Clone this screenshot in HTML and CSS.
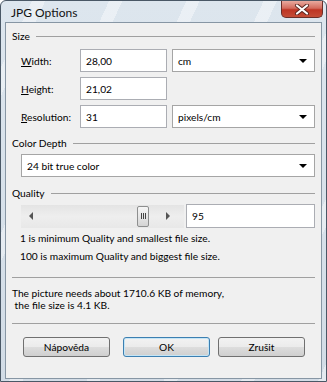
FILE: index.html
```html
<!DOCTYPE html>
<html lang="cs">

<head>
    <meta charset="UTF-8">
    <title>JPG Options</title>
    <link rel="stylesheet" href="styles.css">
</head>

<body>
    <div class="window">
        <div class="titlebar">
            <span class="title">JPG Options</span>
            <div class="close">
                <svg width="16" height="11" viewBox="0 0 16 11">
                    <path d="M3 1.5 L13 9.5 M13 1.5 L3 9.5" stroke="#5a2620" stroke-width="4" stroke-linecap="round" fill="none"/>
                    <path d="M3 1.5 L13 9.5 M13 1.5 L3 9.5" stroke="#fff" stroke-width="2.2" stroke-linecap="round" fill="none"/>
                </svg>
            </div>
        </div>
        <div class="client">
            <div class="group size-group">Size</div>
            <div class="row">
                <label><u>W</u>idth:</label>
                <div class="field">28,00</div>
                <div class="combo">cm<span class="arrow"></span></div>
            </div>
            <div class="row">
                <label><u>H</u>eight:</label>
                <div class="field">21,02</div>
            </div>
            <div class="row">
                <label><u>R</u>esolution:</label>
                <div class="field">31</div>
                <div class="combo">pixels/cm<span class="arrow"></span></div>
            </div>

            <div class="group">Color Depth</div>
            <div class="combo wide">24 bit true color<span class="arrow"></span></div>

            <div class="group quality-group">Quality</div>
            <div class="quality-row">
                <div class="scroll">
                    <span class="tri left"></span>
                    <div class="track">
                        <div class="thumb"><i></i><i></i><i></i></div>
                    </div>
                    <span class="tri right"></span>
                </div>
                <div class="field value">95</div>
            </div>
            <p class="note">1 is minimum Quality and smallest file size.</p>
            <p class="note">100 is maximum Quality and biggest file size.</p>

            <hr>
            <p class="memory">The picture needs about 1710.6 KB of memory,<br>&nbsp;the file size is 4.1 KB.</p>
            <hr>

            <div class="buttons">
                <button class="btn">Nápověda</button>
                <button class="btn default">OK</button>
                <button class="btn">Zrušit</button>
            </div>
        </div>
    </div>
</body>

</html>
```

FILE: styles.css
```css
body {
    margin: 0;
    font-family: 'Lato', 'Noto Sans', sans-serif;
    font-size: 10.2px;
    color: #000;
}

.window {
    width: 327px;
    height: 382px;
    box-sizing: border-box;
    display: flex;
    flex-direction: column;
    padding: 0 4px 2px 4px;
    border: 1px solid #4a5866;
    border-radius: 6px 6px 0 0;
    background:
        repeating-linear-gradient(115deg, rgba(255, 255, 255, 0) 0 28px, rgba(255, 255, 255, 0.4) 28px 40px, rgba(255, 255, 255, 0) 40px 70px),
        linear-gradient(#dde6ee, #d2dce6);
}

.titlebar {
    height: 21px;
    display: flex;
    align-items: flex-start;
}

.title {
    font-size: 12px;
    padding: 4px 0 0 6px;
    color: #111;
}

.close {
    margin-left: auto;
    margin-right: -1px;
    width: 42px;
    height: 17px;
    box-sizing: border-box;
    border: 1px solid #6b2e28;
    border-top: none;
    border-radius: 0 0 5px 5px;
    background: linear-gradient(#e9aa9f, #d36b5d 45%, #be3524 55%, #c44d37);
    display: flex;
    align-items: center;
    justify-content: center;
}

.client {
    flex: 1;
    background-color: #f0f0f0;
    border: 1px solid #8796a4;
    padding: 0 6px;
}

.group {
    display: flex;
    align-items: center;
    height: 14px;
    margin-top: 8px;
    margin-bottom: 4px;
}

.group::after {
    content: "";
    flex: 1;
    height: 1px;
    background-color: #a0a0a0;
    margin-left: 6px;
    margin-top: 1px;
}

.size-group {
    margin-top: 6px;
    margin-bottom: 6px;
}

.quality-group {
    margin-top: 9px;
}

.row {
    display: flex;
    align-items: center;
    height: 23px;
    margin-bottom: 5px;
    padding-left: 9px;
}

label {
    width: 59px;
}

.field,
.combo {
    height: 23px;
    box-sizing: border-box;
    background-color: #fff;
    border: 1px solid #abadb3;
    display: flex;
    align-items: center;
    padding-left: 5px;
}

.field {
    width: 87px;
}

.combo {
    width: 143px;
    margin-left: 5px;
    border-color: #a5a5a5;
}

.combo.wide {
    width: 294px;
    margin-left: 9px;
}

.arrow {
    margin-left: auto;
    margin-right: 7px;
    border-left: 4px solid transparent;
    border-right: 4px solid transparent;
    border-top: 4px solid #000;
}

.quality-row {
    display: flex;
    align-items: center;
    margin-top: 4px;
    padding-left: 9px;
}

.scroll {
    width: 163px;
    height: 23px;
    display: flex;
    align-items: center;
    background: linear-gradient(#e4e4e4, #eeeeee 50%, #e8e8e8);
}

.tri {
    width: 0;
    height: 0;
    border-top: 4px solid transparent;
    border-bottom: 4px solid transparent;
}

.tri.left {
    border-right: 4px solid #555;
    margin: 0 0 0 8px;
}

.tri.right {
    border-left: 4px solid #555;
    margin: 0 14px 0 0;
}

.track {
    flex: 1;
    display: flex;
    justify-content: flex-end;
    padding-right: 17px;
}

.thumb {
    width: 12px;
    height: 21px;
    box-sizing: border-box;
    border: 1px solid #8e8f8f;
    border-radius: 2px;
    background: linear-gradient(#f6f6f6, #e6e6e6 50%, #d4d4d4);
    display: flex;
    align-items: center;
    justify-content: center;
    gap: 1px;
}

.thumb i {
    width: 1px;
    height: 6px;
    background-color: #444;
}

.field.value {
    width: 129px;
    height: 24px;
    margin-left: 2px;
}

.note {
    margin: 0;
    padding-left: 8px;
    height: 18px;
    line-height: 18px;
}

.quality-row + .note {
    margin-top: 1px;
}

hr {
    border: none;
    height: 1px;
    background-color: #a0a0a0;
    margin: 12px 0 0 0;
}

.memory {
    margin: 9px 0 9px 0;
    line-height: 12px;
}

.buttons {
    display: flex;
    gap: 8px;
    padding-left: 11px;
    margin-top: 13px;
}

.btn {
    width: 87px;
    height: 20px;
    font-family: inherit;
    font-size: 10.2px;
    color: #000;
    border: 1px solid #707070;
    border-radius: 3px;
    background: linear-gradient(#f2f2f2, #ebebeb 50%, #dddddd 51%, #cfcfcf);
    padding: 0;
}

.btn.default {
    margin-left: 5px;
    border-color: #3c7fb1;
    box-shadow: inset 0 0 0 1px #c4e5f6;
}
```
